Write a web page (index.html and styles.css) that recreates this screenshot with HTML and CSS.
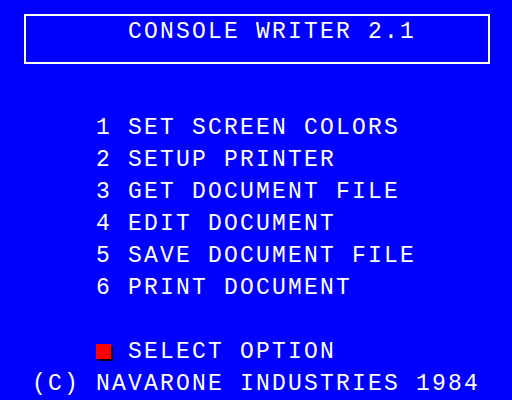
FILE: index.html
```html
<!DOCTYPE html>
<html lang="en">
<head>
    <meta charset="UTF-8">
    <meta name="viewport" content="width=device-width, initial-scale=1.0">
    <title>Console Writer 2.1</title>
    <link rel="stylesheet" href="styles.css">
</head>
<body>
    <div class="screen">
        <div class="title-box">
            <div class="line">CONSOLE WRITER 2.1</div>
        </div>

        <div class="menu">
            <div class="line">1 SET SCREEN COLORS</div>
            <div class="line">2 SETUP PRINTER</div>
            <div class="line">3 GET DOCUMENT FILE</div>
            <div class="line">4 EDIT DOCUMENT</div>
            <div class="line">5 SAVE DOCUMENT FILE</div>
            <div class="line">6 PRINT DOCUMENT</div>
        </div>

        <div class="prompt line"><span class="cursor"></span> SELECT OPTION</div>
        <div class="copyright line">(C) NAVARONE INDUSTRIES 1984</div>
    </div>
</body>
</html>
```

FILE: styles.css
```css
html, body {
    margin: 0;
    padding: 0;
    background-color: #0000ff;
}
.screen {
    width: 512px;
    height: 400px;
    padding-top: 14px;
    box-sizing: border-box;
    color: #fff;
    font-family: "Liberation Mono", "DejaVu Sans Mono", monospace;
    font-size: 23px;
}
/* every character sits in a 16px cell, like the old 8x8 font doubled */
.line {
    height: 16px;
    line-height: 16px;
    letter-spacing: 2.2px;
    white-space: pre;
}
.title-box {
    margin-left: 24px;
    width: 466px;
    height: 50px;
    box-sizing: border-box;
    border: 2px solid #fff;
    padding: 8px 0 0 102px;
}
.menu {
    margin-top: 56px;
    padding-left: 96px;
    display: flex;
    flex-direction: column;
    gap: 16px;
}
.prompt {
    margin-top: 48px;
    padding-left: 96px;
}
.cursor {
    display: inline-block;
    width: 15px;
    height: 15px;
    margin-right: 1px;
    vertical-align: top;
    background-color: #ff0000;
    box-shadow: 2px 2px 0 #1a0010;
    letter-spacing: 0;
}
.copyright {
    margin-top: 16px;
    padding-left: 32px;
}
```
